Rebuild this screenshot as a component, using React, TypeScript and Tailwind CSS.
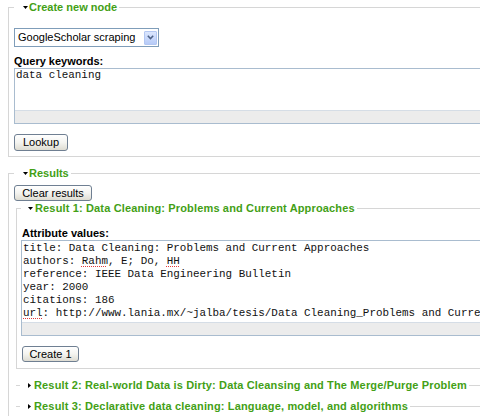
import React from "react";

const mono = "font-['Liberation_Mono','Courier_New',monospace] text-[10.9px] leading-[13px]";
const spell = "underline decoration-dotted decoration-[#e23b3b] decoration-1 underline-offset-[2px]";

function Tri({ open = true }: { open?: boolean }) {
  return (
    <span className="w-[5px] h-[5px] flex items-center justify-center">
      {open ? (
        <svg width="5" height="3" viewBox="0 0 5 3">
          <path d="M0 0h5L2.5 3z" fill="#000" />
        </svg>
      ) : (
        <svg width="3" height="5" viewBox="0 0 3 5">
          <path d="M0 0l3 2.5L0 5z" fill="#000" />
        </svg>
      )}
    </span>
  );
}

function Legend({ children, open = true, inner = false }: { children: React.ReactNode; open?: boolean; inner?: boolean }) {
  return (
    <legend className={`${inner ? "pl-[7px] tracking-[0.15px]" : "pl-[9px]"} pr-[2px] leading-[14px] font-bold text-[#43a016]`}>
      <span className={`flex items-center ${inner ? "gap-[2px]" : "gap-[1px]"}`}>
        <Tri open={open} />
        <span>{children}</span>
      </span>
    </legend>
  );
}

function Btn({ label, h = "h-[16px]", w }: { label: string; h?: string; w: string }) {
  return (
    <button className={`${h} ${w} flex items-center justify-center rounded-[3px] border border-[#6f7f92] bg-gradient-to-b from-white via-[#f4f4f0] to-[#dedcd2] text-[11px] leading-none text-black`}>
      {label}
    </button>
  );
}

function TextBox({ h, textH, pt, children }: { h: string; textH: string; pt: string; children: React.ReactNode }) {
  return (
    <div className={`${h} flex flex-col border border-[#a9bccf] bg-white`}>
      <div className={`${textH} ${pt} px-[1px] overflow-hidden whitespace-pre ${mono} text-[#111]`}>{children}</div>
      <div className="flex-1 bg-[#ececec] border-t border-[#d5dde6]" />
    </div>
  );
}

export default function App() {
  return (
    <div className="w-[480px] h-[416px] overflow-hidden bg-white font-['Liberation_Sans',Arial,sans-serif] text-[11px] text-black">
      <div className="w-[640px] pl-[8px]">
        {/* Create new node */}
        <fieldset className="border border-[#d6d6d6] px-[5px] pt-[14px] pb-[5px]">
          <Legend>Create new node</Legend>
          <div className="w-[145px] h-[19px] border border-[#7f9db9] flex items-center justify-between pl-[3px] pr-[1px]">
            <span className="leading-none">GoogleScholar scraping</span>
            <span className="w-[13px] h-[14px] rounded-[1px] border border-[#b3c7f2] bg-gradient-to-b from-[#dbe6fd] to-[#b7cbf8] flex items-center justify-center">
              <svg width="7" height="5" viewBox="0 0 7 5">
                <path d="M0.8 0.8L3.5 3.6L6.2 0.8" stroke="#4d6185" strokeWidth="1.5" fill="none" />
              </svg>
            </span>
          </div>
          <div className="mt-[7px] font-bold leading-[14px]">Query keywords:</div>
          <TextBox h="h-[56px]" textH="h-[41px]" pt="pt-0">data cleaning</TextBox>
          <div className="mt-[10px]">
            <Btn label="Lookup" h="h-[17px]" w="w-[54px]" />
          </div>
        </fieldset>

        {/* Results */}
        <fieldset className="mt-[9px] border border-[#d6d6d6] px-[5px] pt-[5px] pb-[20px]">
          <Legend>Results</Legend>
          <Btn label="Clear results" w="w-[78px]" />

          <fieldset className="border border-[#d6d6d6] ml-[2px] px-[4px] pt-[12px] pb-[6px]">
            <Legend inner>Result 1: Data Cleaning: Problems and Current Approaches</Legend>
            <div className="font-bold leading-[13px] pl-[1px]">Attribute values:</div>
            <TextBox h="h-[96px]" textH="h-[81px]" pt="pt-[1px]">
              <div>title: Data Cleaning: Problems and Current Approaches</div>
              <div>
                authors: <span className={spell}>Rahm</span>, E; Do, <span className={spell}>HH</span>
              </div>
              <div>reference: IEEE Data Engineering Bulletin</div>
              <div>year: 2000</div>
              <div>citations: 186</div>
              <div>
                <span className={spell}>url</span>: http://www.lania.mx/~jalba/tesis/Data Cleaning_Problems and Current Approaches.pdf
              </div>
            </TextBox>
            <div className="mt-[10px] pl-[1px]">
              <Btn label="Create 1" w="w-[57px]" />
            </div>
          </fieldset>

          <fieldset className="mt-[9px] ml-[2px] border-t border-[#d6d6d6] px-[4px]">
            <Legend inner open={false}>Result 2: Real-world Data is Dirty: Data Cleansing and The Merge/Purge Problem</Legend>
          </fieldset>
          <fieldset className="mt-[7px] ml-[2px] border-t border-[#d6d6d6] px-[4px]">
            <Legend inner open={false}>Result 3: Declarative data cleaning: Language, model, and algorithms</Legend>
          </fieldset>
        </fieldset>
      </div>
    </div>
  );
}
